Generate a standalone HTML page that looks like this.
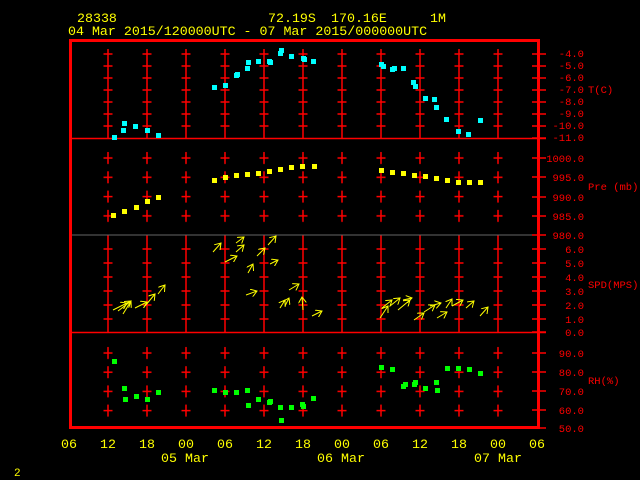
<!DOCTYPE html>
<html><head><meta charset="utf-8"><style>
html,body{margin:0;padding:0;background:#000;width:640px;height:480px;overflow:hidden}
svg{display:block}
text{font-family:"Liberation Mono",monospace}
.y{fill:#ff0;font-size:13.3px}
.r{fill:#f00;font-size:10.5px}
</style></head><body>
<svg width="640" height="480" viewBox="0 0 640 480" xmlns="http://www.w3.org/2000/svg">
<defs>
<pattern id="pT" patternUnits="userSpaceOnUse" x="88.5" y="48" width="39" height="12">
<line x1="15" y1="6" x2="24" y2="6" stroke="#f00" stroke-width="1.5"/></pattern>
<pattern id="pP" patternUnits="userSpaceOnUse" x="88.5" y="148.5" width="39" height="19.3">
<line x1="15" y1="9.5" x2="24" y2="9.5" stroke="#f00" stroke-width="1.5"/><line x1="19.5" y1="3.5" x2="19.5" y2="15.5" stroke="#f00" stroke-width="1.5"/></pattern>
<pattern id="pS" patternUnits="userSpaceOnUse" x="88.5" y="242" width="39" height="14">
<line x1="15" y1="7" x2="24" y2="7" stroke="#f00" stroke-width="1.5"/></pattern>
<pattern id="pR" patternUnits="userSpaceOnUse" x="88.5" y="343.5" width="39" height="19.2">
<line x1="15" y1="9.5" x2="24" y2="9.5" stroke="#f00" stroke-width="1.5"/><line x1="19.5" y1="3.5" x2="19.5" y2="15.5" stroke="#f00" stroke-width="1.5"/></pattern>
<pattern id="vT" patternUnits="userSpaceOnUse" x="88.5" y="0" width="39" height="10">
<line x1="19.5" y1="0" x2="19.5" y2="10" stroke="#f00" stroke-width="1.5"/></pattern>
<marker id="ah" markerWidth="8" markerHeight="8" refX="6" refY="4" orient="auto" markerUnits="userSpaceOnUse">
<path d="M0,0 L6,4 L0,8" fill="none" stroke="#ff0" stroke-width="1"/></marker>
</defs>

<text class="y" x="77" y="22">28338</text>
<text class="y" x="268" y="22">72.19S</text>
<text class="y" x="331" y="22">170.16E</text>
<text class="y" x="430" y="22">1M</text>
<text class="y" x="68" y="35">04 Mar 2015/120000UTC - 07 Mar 2015/000000UTC</text>

<!-- grid -->
<rect x="100" y="49" width="406" height="89" fill="url(#vT)"/>
<rect x="100" y="48" width="406" height="84" fill="url(#pT)"/>
<rect x="100" y="148" width="406" height="78" fill="url(#pP)"/>
<rect x="100" y="235" width="406" height="97" fill="url(#vT)"/>
<rect x="100" y="242" width="406" height="84" fill="url(#pS)"/>
<rect x="100" y="343" width="406" height="77" fill="url(#pR)"/>
<line x1="70" y1="235" x2="546" y2="235" stroke="#666" stroke-width="1"/>
<line x1="70" y1="138.5" x2="546" y2="138.5" stroke="#f00" stroke-width="1.5"/>
<line x1="70" y1="332.5" x2="546" y2="332.5" stroke="#f00" stroke-width="1.5"/>
<rect x="70.5" y="40.5" width="468" height="387" fill="none" stroke="#f00" stroke-width="3"/>

<!-- right axis ticks -->
<g stroke="#f00" stroke-width="1.5">
<path d="M532,54H546M532,66H546M532,78H546M532,90H546M532,102H546M532,114H546M532,126H546M532,138H546
M532,158H546M532,177H546M532,197H546M532,216H546M532,235H546
M532,249H546M532,263H546M532,277H546M532,291H546M532,305H546M532,319H546M532,332H546
M532,353H546M532,372H546M532,391H546M532,410H546M532,428H546"/>
</g>
<g class="r" text-anchor="end">
<text x="584" y="57">-4.0</text><text x="584" y="69">-5.0</text><text x="584" y="81">-6.0</text><text x="584" y="93">-7.0</text><text x="584" y="105">-8.0</text><text x="584" y="117">-9.0</text><text x="584" y="129">-10.0</text><text x="584" y="141">-11.0</text>
<text x="584" y="162">1000.0</text><text x="584" y="181">995.0</text><text x="584" y="201">990.0</text><text x="584" y="220">985.0</text><text x="584" y="239">980.0</text>
<text x="584" y="253">6.0</text><text x="584" y="267">5.0</text><text x="584" y="281">4.0</text><text x="584" y="295">3.0</text><text x="584" y="309">2.0</text><text x="584" y="323">1.0</text><text x="584" y="336">0.0</text>
<text x="584" y="357">90.0</text><text x="584" y="376">80.0</text><text x="584" y="395">70.0</text><text x="584" y="414">60.0</text><text x="584" y="432">50.0</text>
</g>
<g class="r">
<text x="588" y="93">T(C)</text>
<text x="588" y="190">Pre (mb)</text>
<text x="588" y="288">SPD(MPS)</text>
<text x="588" y="384">RH(%)</text>
</g>

<!-- temp -->
<g fill="#0ff">
<rect x="112" y="135" width="5" height="5"/><rect x="121" y="128" width="5" height="5"/><rect x="122" y="121" width="5" height="5"/><rect x="133" y="124" width="5" height="5"/><rect x="145" y="128" width="5" height="5"/><rect x="156" y="133" width="5" height="5"/>
<rect x="212" y="85" width="5" height="5"/><rect x="223" y="83" width="5" height="5"/><rect x="234" y="73" width="5" height="5"/><rect x="235" y="72" width="5" height="5"/><rect x="245" y="66" width="5" height="5"/><rect x="246" y="60" width="5" height="5"/><rect x="256" y="59" width="5" height="5"/><rect x="267" y="59" width="5" height="5"/><rect x="268" y="60" width="5" height="5"/><rect x="278" y="51" width="5" height="5"/><rect x="279" y="48" width="5" height="5"/><rect x="289" y="54" width="5" height="5"/><rect x="301" y="56" width="5" height="5"/><rect x="302" y="57" width="5" height="5"/><rect x="311" y="59" width="5" height="5"/>
<rect x="379" y="62" width="5" height="5"/><rect x="381" y="64" width="5" height="5"/><rect x="390" y="67" width="5" height="5"/><rect x="392" y="66" width="5" height="5"/><rect x="401" y="66" width="5" height="5"/><rect x="411" y="80" width="5" height="5"/><rect x="413" y="84" width="5" height="5"/><rect x="423" y="96" width="5" height="5"/><rect x="432" y="97" width="5" height="5"/><rect x="434" y="105" width="5" height="5"/><rect x="444" y="117" width="5" height="5"/><rect x="456" y="129" width="5" height="5"/><rect x="466" y="132" width="5" height="5"/><rect x="478" y="118" width="5" height="5"/>
</g>
<!-- pressure -->
<g fill="#ff0">
<rect x="111" y="213" width="5" height="5"/><rect x="122" y="209" width="5" height="5"/><rect x="134" y="205" width="5" height="5"/><rect x="145" y="199" width="5" height="5"/><rect x="156" y="195" width="5" height="5"/>
<rect x="212" y="178" width="5" height="5"/><rect x="223" y="175" width="5" height="5"/><rect x="234" y="173" width="5" height="5"/><rect x="245" y="172" width="5" height="5"/><rect x="256" y="171" width="5" height="5"/><rect x="267" y="169" width="5" height="5"/><rect x="278" y="167" width="5" height="5"/><rect x="289" y="165" width="5" height="5"/><rect x="300" y="164" width="5" height="5"/><rect x="312" y="164" width="5" height="5"/>
<rect x="379" y="168" width="5" height="5"/><rect x="390" y="170" width="5" height="5"/><rect x="401" y="171" width="5" height="5"/><rect x="412" y="173" width="5" height="5"/><rect x="423" y="174" width="5" height="5"/><rect x="434" y="176" width="5" height="5"/><rect x="445" y="178" width="5" height="5"/><rect x="456" y="180" width="5" height="5"/><rect x="467" y="180" width="5" height="5"/><rect x="478" y="180" width="5" height="5"/>
</g>
<!-- wind arrows -->
<g stroke="#ff0" stroke-width="1" fill="none" marker-end="url(#ah)">
<line x1="113" y1="310" x2="127" y2="303"/><line x1="118" y1="311" x2="131" y2="301"/><line x1="123" y1="314" x2="131" y2="301"/><line x1="135" y1="308" x2="147" y2="302"/><line x1="145" y1="306" x2="155" y2="294"/><line x1="158" y1="294" x2="165" y2="285"/>
<line x1="213" y1="252" x2="221" y2="243"/><line x1="225" y1="262" x2="237" y2="256"/><line x1="236" y1="252" x2="244" y2="245"/><line x1="236" y1="243" x2="244" y2="237"/><line x1="248" y1="273" x2="253" y2="264"/><line x1="257" y1="256" x2="265" y2="248"/><line x1="268" y1="245" x2="276" y2="236"/><line x1="270" y1="264" x2="278" y2="260"/><line x1="246" y1="295" x2="257" y2="291"/>
<line x1="280" y1="308" x2="285" y2="300"/><line x1="289" y1="290" x2="299" y2="284"/><line x1="303" y1="310" x2="302" y2="297"/><line x1="312" y1="316" x2="322" y2="311"/><line x1="285" y1="306" x2="289" y2="298"/>
<line x1="380" y1="318" x2="388" y2="306"/><line x1="382" y1="308" x2="392" y2="300"/><line x1="390" y1="306" x2="400" y2="298"/><line x1="398" y1="310" x2="410" y2="300"/><line x1="403" y1="300" x2="412" y2="298"/><line x1="414" y1="320" x2="424" y2="313"/><line x1="424" y1="312" x2="435" y2="305"/><line x1="430" y1="306" x2="441" y2="303"/><line x1="437" y1="318" x2="447" y2="312"/><line x1="446" y1="308" x2="452" y2="299"/><line x1="452" y1="306" x2="463" y2="300"/><line x1="466" y1="308" x2="474" y2="301"/><line x1="480" y1="316" x2="488" y2="307"/>
</g>
<!-- RH -->
<g fill="#0f0">
<rect x="112" y="359" width="5" height="5"/><rect x="122" y="386" width="5" height="5"/><rect x="123" y="397" width="5" height="5"/><rect x="134" y="394" width="5" height="5"/><rect x="145" y="397" width="5" height="5"/><rect x="156" y="390" width="5" height="5"/>
<rect x="212" y="388" width="5" height="5"/><rect x="223" y="390" width="5" height="5"/><rect x="234" y="390" width="5" height="5"/><rect x="245" y="388" width="5" height="5"/><rect x="246" y="403" width="5" height="5"/><rect x="256" y="397" width="5" height="5"/><rect x="267" y="400" width="5" height="5"/><rect x="268" y="399" width="5" height="5"/><rect x="278" y="405" width="5" height="5"/><rect x="279" y="418" width="5" height="5"/><rect x="289" y="405" width="5" height="5"/><rect x="300" y="402" width="5" height="5"/><rect x="301" y="404" width="5" height="5"/><rect x="311" y="396" width="5" height="5"/>
<rect x="379" y="365" width="5" height="5"/><rect x="390" y="367" width="5" height="5"/><rect x="401" y="384" width="5" height="5"/><rect x="403" y="382" width="5" height="5"/><rect x="412" y="382" width="5" height="5"/><rect x="413" y="380" width="5" height="5"/><rect x="423" y="386" width="5" height="5"/><rect x="434" y="380" width="5" height="5"/><rect x="435" y="388" width="5" height="5"/><rect x="445" y="366" width="5" height="5"/><rect x="456" y="366" width="5" height="5"/><rect x="467" y="367" width="5" height="5"/><rect x="478" y="371" width="5" height="5"/>
</g>

<g class="y" text-anchor="middle">
<text x="69" y="448">06</text><text x="108" y="448">12</text><text x="147" y="448">18</text><text x="186" y="448">00</text><text x="225" y="448">06</text><text x="264" y="448">12</text><text x="303" y="448">18</text><text x="342" y="448">00</text><text x="381" y="448">06</text><text x="420" y="448">12</text><text x="459" y="448">18</text><text x="498" y="448">00</text><text x="537" y="448">06</text>
<text x="185" y="462">05 Mar</text><text x="341" y="462">06 Mar</text><text x="498" y="462">07 Mar</text>
</g>
<text x="14" y="476" fill="#ff0" style="font-size:11px">2</text>
</svg>
</body></html>
